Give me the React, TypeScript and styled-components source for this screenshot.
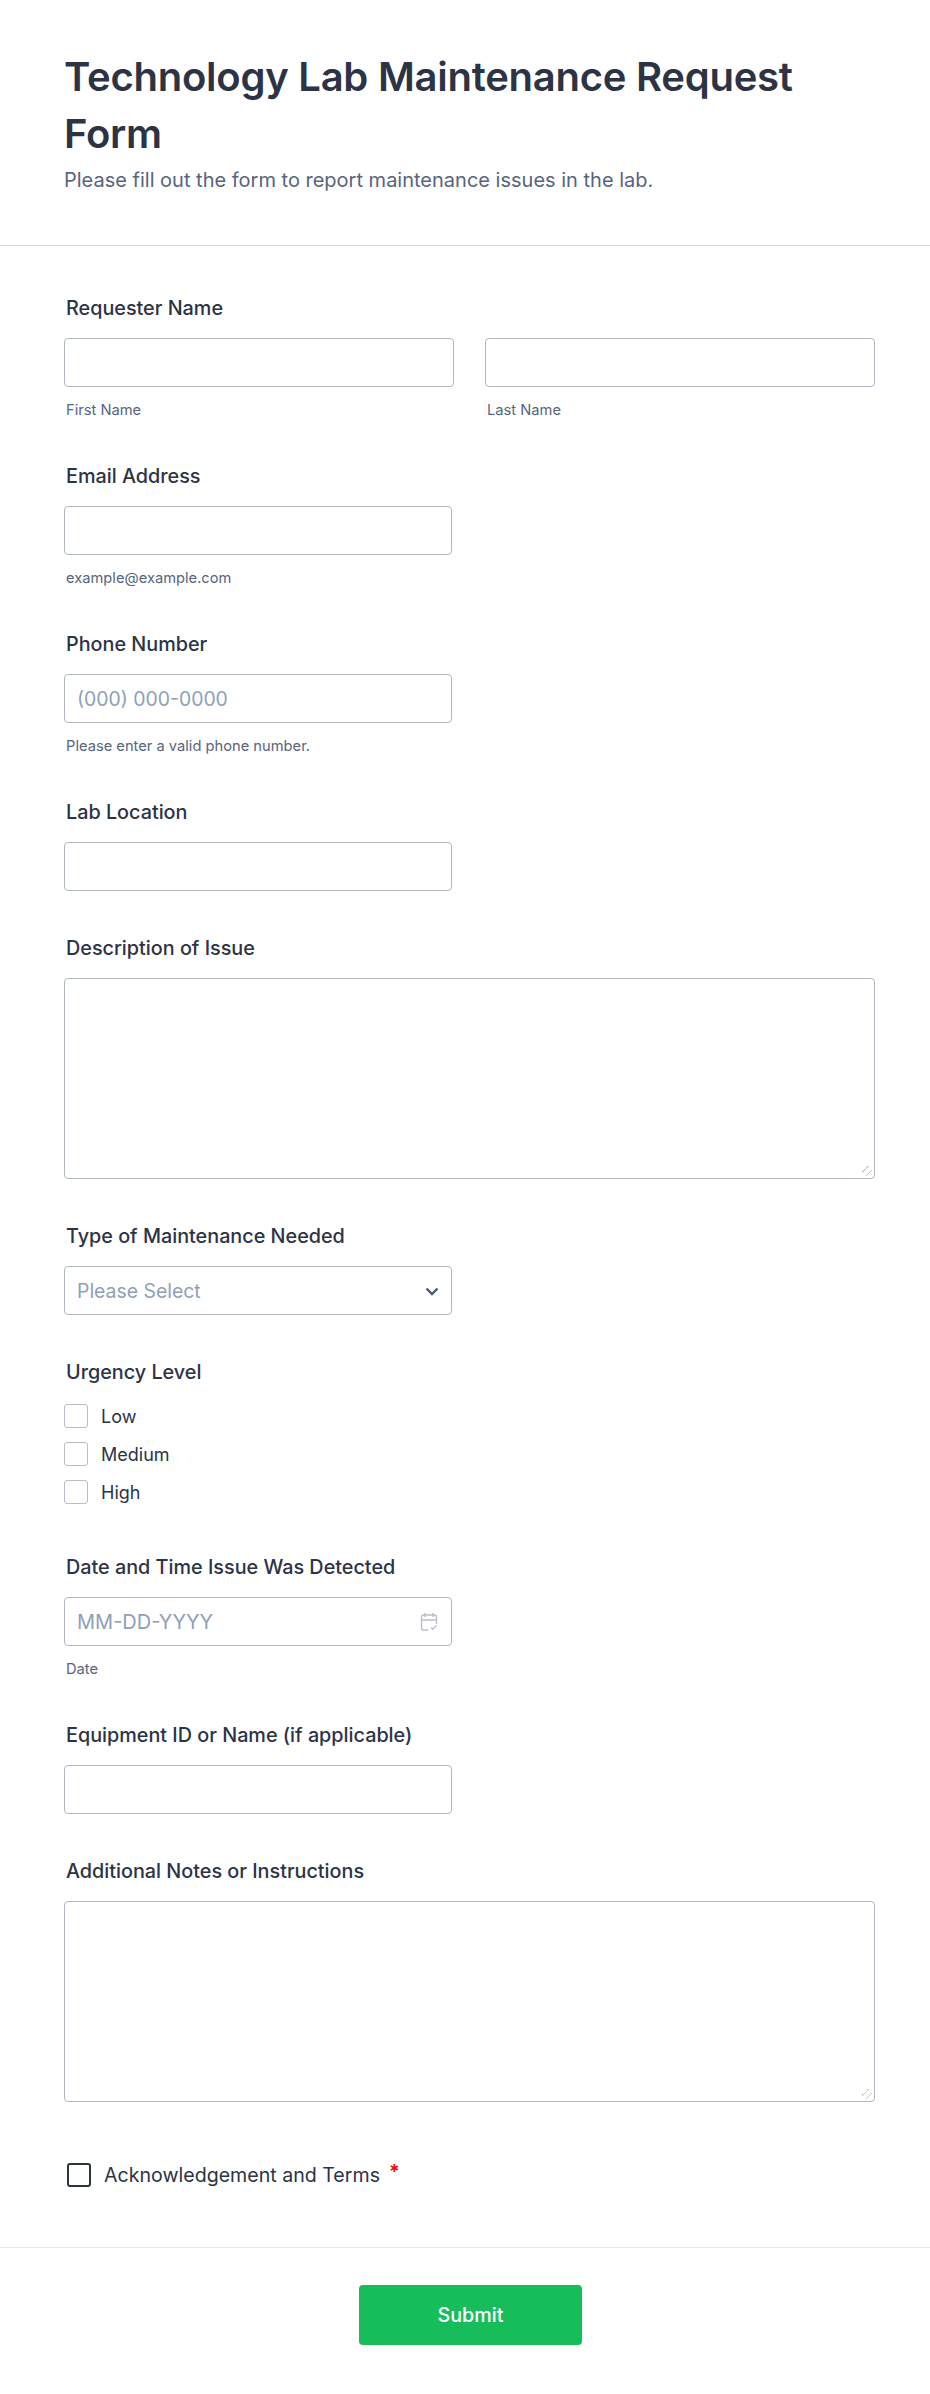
import { createGlobalStyle, styled } from "styled-components";

const GlobalStyle = createGlobalStyle`
  * { box-sizing: border-box; }
  body {
    margin: 0;
    background: #fff;
    font-family: Inter, "Liberation Sans", sans-serif;
    color: #2c3345;
  }
`;

const Page = styled.form`
  width: 930px;
  min-height: 2394px;
  display: flex;
  flex-direction: column;
`;

const Header = styled.header`
  padding: 48px 64px 53px;
  border-bottom: 1px solid #d6d8df;
`;

const Title = styled.h1`
  margin: 0;
  font-size: 40px;
  line-height: 57px;
  font-weight: 600;
  letter-spacing: -0.25px;
  color: #2c3345;
`;

const Subtitle = styled.p`
  margin: 6px 0 0;
  font-size: 20px;
  line-height: 24px;
  color: #57647e;
`;

const Fields = styled.div`
  padding: 48px 55px 0 64px;
  display: flex;
  flex-direction: column;
  gap: 43px;
`;

const Field = styled.div`
  display: flex;
  flex-direction: column;
`;

const Label = styled.label`
  padding-left: 2px;
  margin-bottom: 16px;
  font-size: 19.8px;
  line-height: 28px;
  font-weight: 500;
  color: #2c3345;
`;

const Row = styled.div`
  display: flex;
  gap: 31px;
`;

const Column = styled.div`
  width: 390px;
  display: flex;
  flex-direction: column;
`;

const Wrap = styled.div`
  position: relative;
  width: 388px;
  height: 49px;
`;

const Input = styled.input<{ $full?: boolean }>`
  display: block;
  width: ${(p) => (p.$full ? "100%" : "388px")};
  height: 49px;
  padding: 0 12px;
  border: 1px solid #b0b5c3;
  border-radius: 4px;
  background: #fff;
  font: 400 19.4px Inter, sans-serif;
  color: #2c3345;
  &::placeholder {
    color: #8ea0b8;
    opacity: 1;
  }
`;

const DateInput = styled(Input)`
  font-size: 20px;
`;

const TextArea = styled.textarea`
  display: block;
  width: 811px;
  height: 201px;
  padding: 12px;
  border: 1px solid #b0b5c3;
  border-radius: 4px;
  background: #fff;
  font: 400 20px Inter, sans-serif;
  resize: both;
  &::-webkit-resizer {
    background: linear-gradient(
        135deg,
        transparent 30%,
        #c3c7d2 30%,
        #c3c7d2 38%,
        transparent 38%,
        transparent 66%,
        #c3c7d2 66%,
        #c3c7d2 74%,
        transparent 74%
      )
      right 2px bottom 2px / 10px 10px no-repeat;
  }
`;

const Select = styled.select`
  display: block;
  width: 388px;
  height: 49px;
  padding: 0 12px;
  border: 1px solid #b0b5c3;
  border-radius: 4px;
  background: #fff;
  appearance: none;
  font: 400 19.4px Inter, sans-serif;
  color: #8ea0b8;
`;

const FieldIcon = styled.svg<{ $right: number }>`
  position: absolute;
  top: 50%;
  right: ${(p) => p.$right}px;
  pointer-events: none;
  transform: translateY(-50%);
`;

const Sub = styled.span`
  padding-left: 2px;
  margin-top: 14px;
  font-size: 14.7px;
  line-height: 18px;
  color: #57647e;
`;

const Options = styled.div`
  display: flex;
  flex-direction: column;
  gap: 14px;
  margin: 2px 0 6px;
`;

const Option = styled.label`
  display: flex;
  align-items: center;
  gap: 13px;
  height: 24px;
  font-size: 18px;
  color: #2c3345;
`;

const Check = styled.input`
  appearance: none;
  width: 24px;
  height: 24px;
  margin: 0;
  border: 1px solid #b8bdc9;
  border-radius: 3px;
  background: #fff;
`;

const Terms = styled.label`
  display: flex;
  align-items: flex-start;
  gap: 13px;
  margin-top: 18px;
  padding-left: 3px;
  font-size: 19.6px;
  line-height: 24px;
  color: #2c3345;
`;

const TermsCheck = styled(Check)`
  border: 2px solid #2c3345;
`;

const Required = styled.span`
  position: relative;
  top: -3px;
  margin-left: 9px;
  color: #f00;
  font-weight: 600;
`;

const Footer = styled.footer`
  margin-top: 60px;
  padding-top: 37px;
  border-top: 1px solid #e6e7ee;
  display: flex;
  justify-content: center;
`;

const Submit = styled.button`
  width: 223px;
  height: 60px;
  margin-left: 11px;
  border: none;
  border-radius: 4px;
  background: #18bd5b;
  color: #fff;
  font: 500 19.7px Inter, sans-serif;
`;

const Chevron = () => (
  <FieldIcon $right={13} width="14" height="10" viewBox="0 0 14 10" fill="none">
    <path d="M1.500 2.500 7 8 12.500 2.500" stroke="#4c5a78" strokeWidth="2.400" />
  </FieldIcon>
);

const CalendarIcon = () => (
  <FieldIcon $right={14} width="18" height="20" viewBox="0 0 18 20" fill="none">
    <path
      d="M8.500 18H3.500A2 2 0 0 1 1.500 16V5A2 2 0 0 1 3.500 3H14.500A2 2 0 0 1 16.500 5V12M5 1V5M13 1V5M1.500 8H16.500M11 15.500 12.800 17.300 16.500 13.600"
      stroke="#b8bdc9"
      strokeWidth="1.400"
    />
  </FieldIcon>
);

const urgency = ["Low", "Medium", "High"];

export default function App() {
  return (
    <Page>
      <GlobalStyle />
      <Header>
        <Title>Technology Lab Maintenance Request Form</Title>
        <Subtitle>Please fill out the form to report maintenance issues in the lab.</Subtitle>
      </Header>
      <Fields>
        <Field>
          <Label>Requester Name</Label>
          <Row>
            <Column>
              <Input $full />
              <Sub>First Name</Sub>
            </Column>
            <Column>
              <Input $full />
              <Sub>Last Name</Sub>
            </Column>
          </Row>
        </Field>
        <Field>
          <Label>Email Address</Label>
          <Input type="email" />
          <Sub>example@example.com</Sub>
        </Field>
        <Field>
          <Label>Phone Number</Label>
          <Input type="tel" placeholder="(000) 000-0000" />
          <Sub>Please enter a valid phone number.</Sub>
        </Field>
        <Field>
          <Label>Lab Location</Label>
          <Input />
        </Field>
        <Field>
          <Label>Description of Issue</Label>
          <TextArea />
        </Field>
        <Field>
          <Label>Type of Maintenance Needed</Label>
          <Wrap>
            <Select defaultValue="">
              <option value="">Please Select</option>
            </Select>
            <Chevron />
          </Wrap>
        </Field>
        <Field>
          <Label>Urgency Level</Label>
          <Options>
            {urgency.map((level) => (
              <Option key={level}>
                <Check type="checkbox" />
                {level}
              </Option>
            ))}
          </Options>
        </Field>
        <Field>
          <Label>Date and Time Issue Was Detected</Label>
          <Wrap>
            <DateInput placeholder="MM-DD-YYYY" />
            <CalendarIcon />
          </Wrap>
          <Sub>Date</Sub>
        </Field>
        <Field>
          <Label>Equipment ID or Name (if applicable)</Label>
          <Input />
        </Field>
        <Field>
          <Label>Additional Notes or Instructions</Label>
          <TextArea />
        </Field>
        <Terms>
          <TermsCheck type="checkbox" />
          <span>
            Acknowledgement and Terms<Required>*</Required>
          </span>
        </Terms>
      </Fields>
      <Footer>
        <Submit type="button">Submit</Submit>
      </Footer>
    </Page>
  );
}
